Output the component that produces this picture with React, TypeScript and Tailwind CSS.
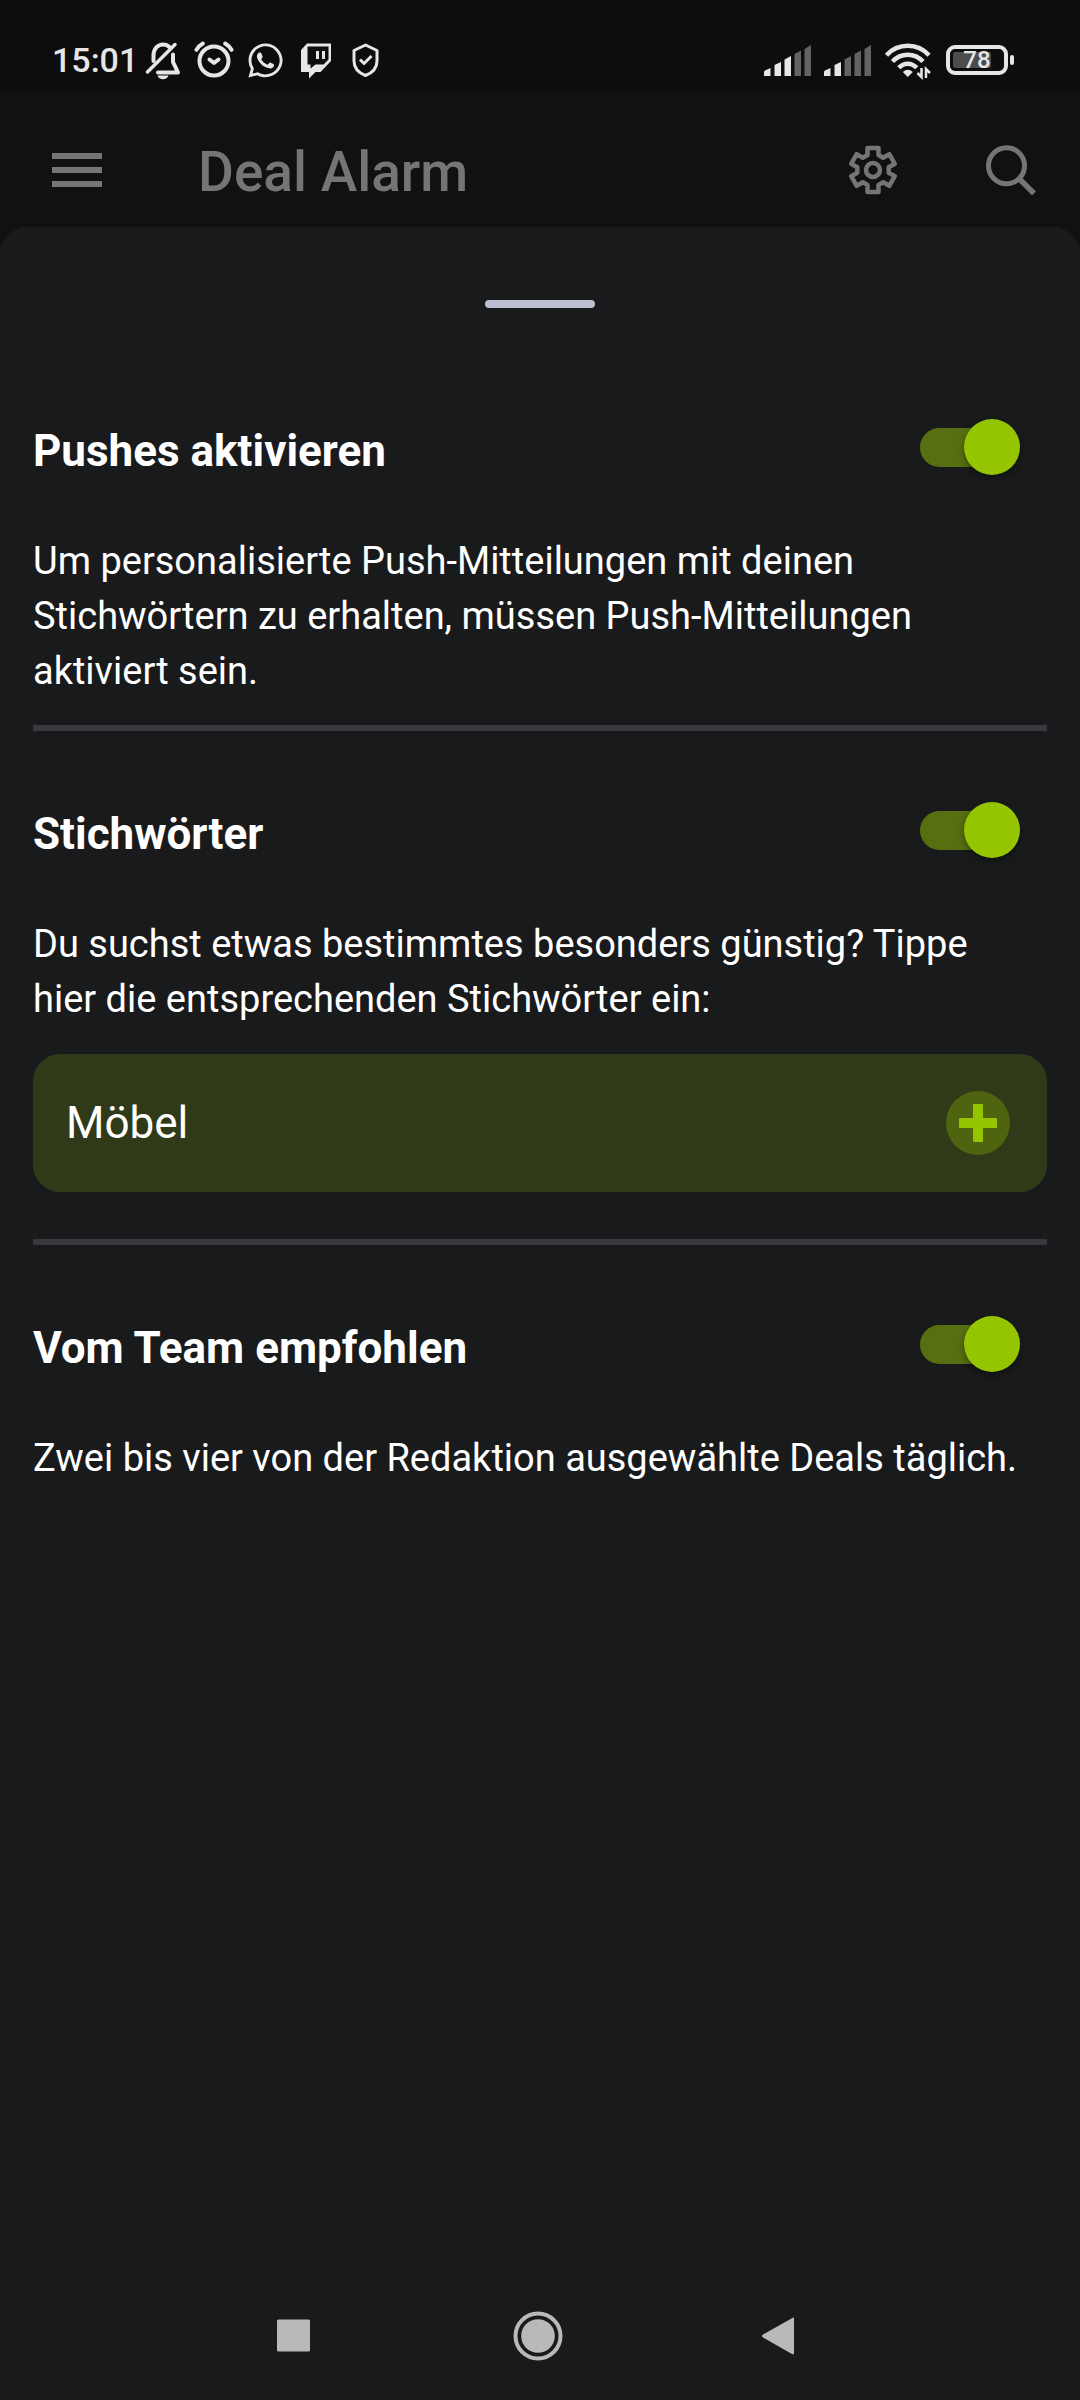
import React, { useId, useState } from 'react';
import { FaWhatsapp } from 'react-icons/fa';

const BellOffIcon = () => (
  <svg viewBox="0 0 40 40" className="size-10" fill="none" stroke="currentColor" strokeWidth="4" strokeLinecap="round" strokeLinejoin="round">
    <path d="M10.5 21V15.5C10.5 8.5 15 4.5 20 4.5c2.8 0 5 1 6.8 2.8" />
    <path d="M30 14.5V22l5 10.5H15" />
    <path d="M4.5 32L32 4.5" strokeWidth="3.5" />
    <path d="M14.5 35.5h11c-.8 2.6-3 3.8-5.5 3.8s-4.7-1.2-5.5-3.8z" fill="currentColor" stroke="none" />
  </svg>
);

const AlarmIcon = () => (
  <svg viewBox="0 0 40 40" className="size-10" fill="none" stroke="currentColor" strokeWidth="4" strokeLinecap="round" strokeLinejoin="round">
    <circle cx="20" cy="21" r="14.5" />
    <path d="M15.5 19.5l4.5 3.5 4.5-3.5" />
    <path d="M2.5 9.8C4 7.2 6.2 5 8.8 3.5M37.500 9.8C36 7.2 33.8 5 31.2 3.5" />
  </svg>
);

const TwitchIcon = () => (
  <svg viewBox="0 0 40 40" className="size-10" fill="currentColor">
    <path fillRule="evenodd" d="M11 3.5h24V21L24.500 32h-5L13 38.500V32H5V10zM11.500 6.500V24.500h3v4l5-4h8l5-5V6.500z" />
    <path d="M20 11h3v8h-3zM26 11h3v8h-3z" />
  </svg>
);

const ShieldIcon = () => (
  <svg viewBox="0 0 40 40" className="size-10" fill="none" stroke="currentColor" strokeWidth="3" strokeLinejoin="round">
    <path d="M18.500 5L30 10.500V21c0 7-5 12-11.500 14.500C12 33 7 28 7 21V10.500z" />
    <path d="M13 19.500l4 4 7.500-7.500" />
  </svg>
);

const bars = [
  'M0 36v-4q0-1 1-1.500L6.500 28v8z',
  'M10.500 36V25l6.500-3v14z',
  'M20.500 36V19.500l6.500-3.500v20z',
  'M30.500 36V14l6.500-3.500V36z',
  'M40.500 36V9L47 5v31z',
];

const SignalIcon: React.FC<{ level: number }> = ({ level }) => (
  <svg viewBox="0 0 48 40" className="h-10 w-12" fill="currentColor">
    {bars.map((d, i) => (
      <path key={d} d={d} opacity={i < level ? 1 : 0.4} />
    ))}
  </svg>
);

const WifiIcon = () => (
  <svg viewBox="0 0 50 40" className="h-10 w-[50px]" fill="none" stroke="currentColor" strokeWidth="4.500">
    <path d="M2.500 15.200C14 2.700 33.500 2.700 45 15.200" />
    <path d="M8.500 21.500C17 12.500 30.500 12.500 39 21.500" />
    <path d="M14.800 27.800C20 22.300 27.500 22.300 32.700 27.800" />
    <path d="M18.800 32q5-4.500 10 0l-5 5z" fill="currentColor" stroke="none" />
    <path d="M37.500 28v9l-4-4M42 38v-9l4 4" strokeWidth="2.500" />
  </svg>
);

const Battery: React.FC<{ percent: number }> = ({ percent }) => (
  <div className="flex items-center gap-0.5">
    <div className="relative flex h-[30px] w-[62px] items-center justify-center rounded-[9px] border-4 border-[#e6e6e6]">
      <div className="absolute inset-y-[3px] left-[3px] w-[38px] rounded-xs bg-[#4c4c4c]" />
      <span className="relative text-2xl leading-none font-medium">{percent}</span>
    </div>
    <div className="h-2.5 w-1 rounded-xs bg-[#e6e6e6]" />
  </div>
);

const StatusBar = () => (
  <div className="flex h-[93px] items-center justify-between bg-[#0d0d0d] pt-[27px] pr-[66px] pl-[52px] text-[#e6e6e6]">
    <div className="flex items-center gap-[11px]">
      <span className="w-20 text-[34px] leading-10 font-medium">15:01</span>
      <BellOffIcon />
      <AlarmIcon />
      <div className="flex size-10 items-center justify-center">
        <FaWhatsapp className="size-[39px]" />
      </div>
      <TwitchIcon />
      <ShieldIcon />
    </div>
    <div className="flex items-center gap-3">
      <SignalIcon level={3} />
      <SignalIcon level={2} />
      <WifiIcon />
      <Battery percent={78} />
    </div>
  </div>
);

const AppBar = () => (
  <header className="flex h-[134px] items-center bg-[#111111] pt-5 pr-11 pl-[52px] text-[#757575]">
    <button type="button" aria-label="Menü" className="flex w-[50px] flex-col gap-2">
      <span className="h-1.5 w-full bg-current" />
      <span className="h-1.5 w-full bg-current" />
      <span className="h-1.5 w-full bg-current" />
    </button>
    <h1 className="ml-24 flex-1 pt-1 text-[55px] leading-16 font-medium">Deal Alarm</h1>
    <button type="button" aria-label="Einstellungen" className="mr-22">
      <svg viewBox="-25 -25 50 50" className="size-[50px]" fill="none" stroke="currentColor" strokeWidth="4.500" strokeLinejoin="round">
        <path d="M-5.500-15V-22H5.500V-15L10.200-12.300L16.300-15.800L21.800-6.200L15.700-2.700V2.700L21.800 6.200L16.300 15.800L10.200 12.300L5.500 15V22H-5.500V15L-10.200 12.300L-16.300 15.800L-21.800 6.200L-15.700 2.700V-2.700L-21.800-6.200L-16.300-15.800L-10.200-12.300z" />
        <circle r="7" />
      </svg>
    </button>
    <button type="button" aria-label="Suche">
      <svg viewBox="0 0 50 50" className="size-[50px]" fill="none" stroke="currentColor" strokeWidth="5">
        <circle cx="20.500" cy="20.800" r="18" />
        <path d="M33.500 34L48 48.500" strokeWidth="5.500" />
      </svg>
    </button>
  </header>
);

type SectionProps = {
  title: string;
  text: string;
  children?: React.ReactNode;
};

const Section: React.FC<SectionProps> = ({ title, text, children }) => {
  const id = useId();
  const [enabled, setEnabled] = useState(true);

  return (
    <section>
      <div className="flex items-start justify-between pr-[27px]">
        <h2 className="text-[44px] leading-16 font-bold">
          <label htmlFor={id}>{title}</label>
        </h2>
        <div className="relative flex h-14 w-25 items-center">
          <input
            id={id}
            type="checkbox"
            role="switch"
            checked={enabled}
            onChange={() => setEnabled(!enabled)}
            className="peer h-[39px] w-22 appearance-none rounded-full bg-[#3d3f42] checked:bg-[#576f10]"
          />
          <span className="pointer-events-none absolute top-0 left-0 size-14 rounded-full bg-[#b9b9b9] shadow-[0_3px_6px_rgba(0,0,0,0.4)] peer-checked:left-11 peer-checked:bg-[#95c500]" />
        </div>
      </div>
      <p className="mt-[51px] pr-3 text-[38px] leading-[55px]">{text}</p>
      {children}
    </section>
  );
};

const KeywordField = () => {
  const [keyword, setKeyword] = useState('Möbel');

  return (
    <div className="mt-[27px] flex h-[138px] items-center rounded-[27px] bg-[#313a18] pr-[37px] pl-[33px]">
      <input
        type="text"
        aria-label="Stichwort"
        value={keyword}
        onChange={(e) => setKeyword(e.target.value)}
        className="min-w-0 flex-1 bg-transparent text-[44px] leading-16 outline-none"
      />
      <button type="button" aria-label="Hinzufügen" className="flex size-16 items-center justify-center rounded-full bg-[#4e640f] text-[#95c500]">
        <svg viewBox="0 0 38 38" className="size-[38px]" fill="currentColor">
          <rect x="14" width="10" height="38" rx="1" />
          <rect y="14" width="38" height="10" rx="1" />
        </svg>
      </button>
    </div>
  );
};

const NavBar = () => (
  <nav className="flex h-[129px] items-center justify-center gap-48 pr-[5px] text-[#b9b9b9]">
    <button type="button" aria-label="Übersicht">
      <svg viewBox="0 0 50 50" className="size-[50px]" fill="currentColor">
        <rect x="6" y="8.500" width="33" height="32" rx="1.500" />
      </svg>
    </button>
    <button type="button" aria-label="Startbildschirm">
      <svg viewBox="0 0 50 50" className="size-[50px]" fill="currentColor">
        <circle cx="25" cy="25" r="22.500" fill="none" stroke="currentColor" strokeWidth="4" />
        <circle cx="25" cy="25" r="16.800" />
      </svg>
    </button>
    <button type="button" aria-label="Zurück">
      <svg viewBox="0 0 50 50" className="size-[50px]" fill="currentColor">
        <path d="M36.500 7.500Q39 5.500 39 8V42Q39 44.500 36.500 42.700L8 26.500Q6 25 8 23.500z" />
      </svg>
    </button>
  </nav>
);

export default function App() {
  return (
    <div className="flex min-h-screen flex-col bg-[#111111] font-[Roboto,sans-serif] text-white">
      <StatusBar />
      <AppBar />
      <main className="flex flex-1 flex-col rounded-t-[27px] bg-[#191a1b]">
        <div className="mx-auto mt-[73px] h-2 w-[110px] rounded-full bg-[#bec0d2]" />
        <div className="flex-1 px-[33px] pt-[111px]">
          <Section
            title="Pushes aktivieren"
            text="Um personalisierte Push-Mitteilungen mit deinen Stichwörtern zu erhalten, müssen Push-Mitteilungen aktiviert sein."
          />
          <hr className="mt-[26px] mb-[71px] border-t-6 border-[#38393d]" />
          <Section
            title="Stichwörter"
            text="Du suchst etwas bestimmtes besonders günstig? Tippe hier die entsprechenden Stichwörter ein:"
          >
            <KeywordField />
          </Section>
          <hr className="mt-[47px] mb-[71px] border-t-6 border-[#38393d]" />
          <Section title="Vom Team empfohlen" text="Zwei bis vier von der Redaktion ausgewählte Deals täglich." />
        </div>
        <NavBar />
      </main>
    </div>
  );
}
